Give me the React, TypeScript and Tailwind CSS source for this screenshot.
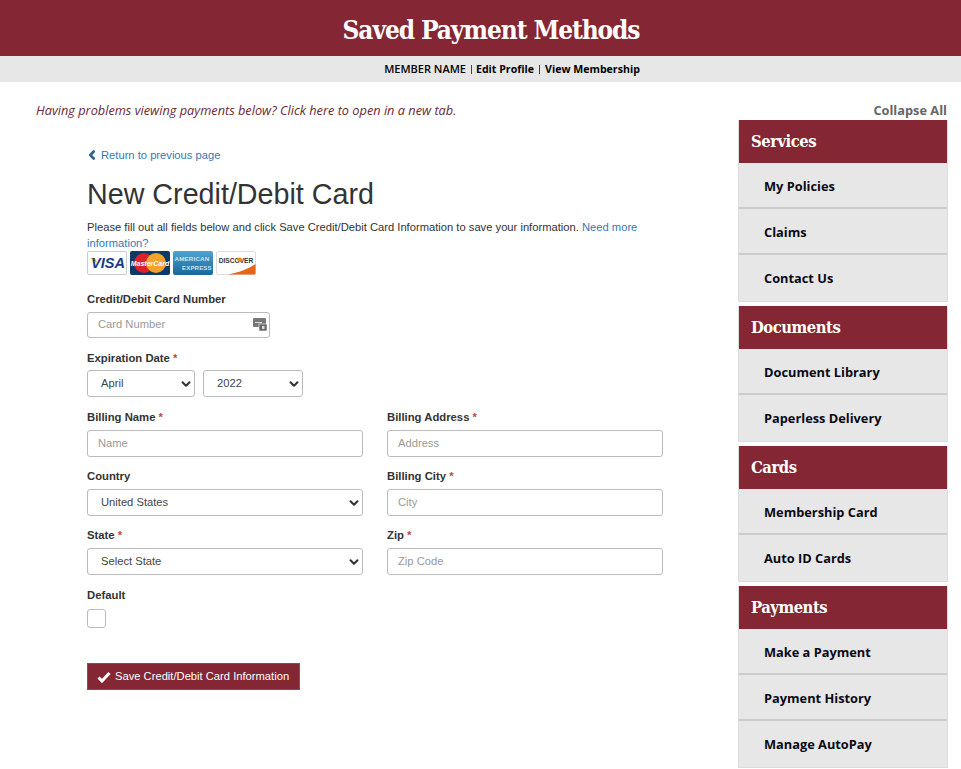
import { ChevronDown, ChevronLeft } from "lucide-react";

const sans = "font-['Liberation_Sans',Arial,sans-serif]";
const slab = "font-['DejaVu_Serif_Condensed','DejaVu_Serif',serif]";
const open = "font-['Open_Sans',sans-serif]";

const NAV = [
  { title: "Services", items: ["My Policies", "Claims", "Contact Us"] },
  { title: "Documents", items: ["Document Library", "Paperless Delivery"] },
  { title: "Cards", items: ["Membership Card", "Auto ID Cards"] },
  { title: "Payments", items: ["Make a Payment", "Payment History", "Manage AutoPay"] },
];

function Label({ text, required }: { text: string; required?: boolean }) {
  return (
    <label className="block h-[16px] mb-[5px] text-[11.3px] leading-[16px] font-bold text-[#333]">
      {text}
      {required && <span className="text-[#b94a48]"> *</span>}
    </label>
  );
}

function TextInput({ placeholder, tall }: { placeholder: string; tall?: boolean }) {
  return (
    <input
      placeholder={placeholder}
      className={`block w-full ${tall ? "h-[27px]" : "h-[26px]"} px-[10px] pb-[2px] bg-white border border-[#bbb] rounded-[3px] text-[11.2px] text-[#555] placeholder:text-[#999] outline-none`}
    />
  );
}

function Select({ value, className }: { value: string; className?: string }) {
  return (
    <div className={`relative ${className ?? ""}`}>
      <select
        defaultValue={value}
        className="block w-full h-[27px] pl-[13px] pr-6 appearance-none bg-white border border-[#bbb] rounded-[3px] text-[11.2px] text-[#444] outline-none"
      >
        <option>{value}</option>
      </select>
      <ChevronDown
        size={14}
        strokeWidth={3.5}
        className="absolute right-[2px] top-[7px] text-[#333] pointer-events-none"
      />
    </div>
  );
}

function CardLogos() {
  return (
    <div className="flex gap-[3px]">
      <svg width="40" height="24" viewBox="0 0 40 24">
        <rect x="0.5" y="0.5" width="39" height="23" rx="1.5" fill="#fff" stroke="#ccc" />
        <path d="M3 7h5l2 5z" fill="#f2ae14" />
        <text x="21" y="17" textAnchor="middle" fontSize="14.5" fontWeight="700" fontStyle="italic" fontFamily="Liberation Sans" fill="#1a3a8a">VISA</text>
      </svg>
      <svg width="40" height="24" viewBox="0 0 40 24">
        <rect width="40" height="24" rx="2" fill="#0b3a68" />
        <circle cx="14" cy="12" r="10" fill="#d9222a" />
        <circle cx="26" cy="12" r="10" fill="#f3a32c" />
        <text x="20" y="14.5" textAnchor="middle" fontSize="7" fontWeight="700" fontStyle="italic" fontFamily="Liberation Sans" fill="#fff">MasterCard</text>
      </svg>
      <svg width="40" height="24" viewBox="0 0 40 24">
        <defs>
          <linearGradient id="amex" x1="0" y1="0" x2="0" y2="1">
            <stop offset="0" stopColor="#4ea3cf" />
            <stop offset="1" stopColor="#16689c" />
          </linearGradient>
        </defs>
        <rect width="40" height="24" rx="2" fill="url(#amex)" />
        <text x="1.5" y="10" fontSize="6.2" fontWeight="700" letterSpacing="0.2" fontFamily="Liberation Sans" fill="#cfe4f0">AMERICAN</text>
        <text x="9" y="18.5" fontSize="6" fontWeight="700" letterSpacing="0.2" fontFamily="Liberation Sans" fill="#cfe4f0">EXPRESS</text>
      </svg>
      <svg width="40" height="24" viewBox="0 0 40 24">
        <rect x="0.5" y="0.5" width="39" height="23" rx="1.5" fill="#fff" stroke="#ddd" />
        <path d="M12 23.5C24 21 32 18 39.5 13v9a1.5 1.5 0 0 1-1.5 1.5z" fill="#e8641b" />
        <text x="20" y="11.5" textAnchor="middle" fontSize="6.6" fontWeight="700" fontFamily="Liberation Sans" fill="#333">DISCOVER</text>
        <circle cx="23.6" cy="9" r="2.4" fill="#ee8a1f" />
      </svg>
    </div>
  );
}

function CvvIcon() {
  return (
    <svg width="14" height="15" viewBox="0 0 14 15" className="absolute right-[3px] top-[5px]">
      <rect x="0" y="1" width="13" height="9" rx="1" fill="#777" />
      <rect x="2" y="5" width="7" height="1" fill="#ddd" />
      <rect x="6" y="7" width="8" height="7" fill="#666" stroke="#fff" strokeWidth="0.6" />
      <rect x="9" y="9" width="2.5" height="3" fill="#ddd" />
    </svg>
  );
}

function PaymentForm() {
  return (
    <div className={`pl-[87px] pt-[28px] ${sans}`}>
      <a className="flex items-center h-[16px] text-[11.2px] text-[#337ab7]">
        <ChevronLeft size={14} strokeWidth={4.5} className="-ml-[2px] mr-[2px] text-[#2a6496]" />
        Return to previous page
      </a>
      <h1 className="mt-[12px] h-[38px] text-[28.7px] leading-[38px] text-[#333]">New Credit/Debit Card</h1>
      <p className="mt-[6px] w-[576px] text-[11.2px] leading-[16px] text-[#333]">
        Please fill out all fields below and click Save Credit/Debit Card Information to save your information.{" "}
        <a className="text-[#337ab7]">Need more information?</a>
      </p>
      <CardLogos />

      <div className="mt-[16px] w-[183px]">
        <Label text="Credit/Debit Card Number" />
        <div className="relative">
          <TextInput placeholder="Card Number" />
          <CvvIcon />
        </div>
      </div>

      <div className="mt-[12px]">
        <Label text="Expiration Date" required />
        <div className="flex gap-[8px] -mt-px">
          <Select value="April" className="w-[108px]" />
          <Select value="2022" className="w-[100px]" />
        </div>
      </div>

      <div className="mt-[12px] grid grid-cols-[276px_276px] gap-x-[24px] gap-y-[11px]">
        <div>
          <Label text="Billing Name" required />
          <TextInput tall placeholder="Name" />
        </div>
        <div>
          <Label text="Billing Address" required />
          <TextInput tall placeholder="Address" />
        </div>
        <div>
          <Label text="Country" />
          <Select value="United States" />
        </div>
        <div>
          <Label text="Billing City" required />
          <TextInput tall placeholder="City" />
        </div>
        <div>
          <Label text="State" required />
          <Select value="Select State" />
        </div>
        <div>
          <Label text="Zip" required />
          <TextInput tall placeholder="Zip Code" />
        </div>
      </div>

      <div className="mt-[12px]">
        <Label text="Default" />
        <input
          type="checkbox"
          className="block mt-[6px] appearance-none w-[19px] h-[19px] bg-white border border-[#bbb] rounded-[3px]"
        />
      </div>

      <button className="mt-[35px] flex items-center w-[213px] h-[27px] pl-[9px] bg-[#842633] border border-[#2e6da4] text-white text-[11.2px]">
        <svg width="14" height="12" viewBox="0 0 14 12" className="mr-[4px]">
          <path d="M1.5 6.5 5 10l7.5-8" fill="none" stroke="#fff" strokeWidth="3" />
        </svg>
        Save Credit/Debit Card Information
      </button>
    </div>
  );
}

function Sidebar() {
  return (
    <aside className="w-[210px] shrink-0">
      <div className={`h-[38px] pt-[20px] pr-px text-right text-[12.8px] leading-[17px] font-bold text-[#666] ${open}`}>
        Collapse All
      </div>
      <div className="flex flex-col gap-[4px]">
        {NAV.map((group) => (
          <section key={group.title} className="border border-[#ddd] border-t-0">
            <h2 className={`flex items-center h-[43px] pt-[1px] pl-[12px] bg-[#842633] text-white text-[16.5px] tracking-[-0.5px] font-bold ${slab}`}>
              {group.title}
            </h2>
            {group.items.map((item) => (
              <a
                key={item}
                className={`flex items-center h-[46px] pt-[4px] last:pt-[2px] pl-[25px] bg-[#e8e7e8] border-b-2 border-[#ccc] last:border-b-0 text-[12.8px] font-bold text-[#0a0a14] ${open}`}
              >
                {item}
              </a>
            ))}
          </section>
        ))}
      </div>
    </aside>
  );
}

export default function App() {
  return (
    <div className="h-[769px] overflow-hidden bg-white">
      <header className={`flex items-center justify-center h-[56px] pt-[4px] pl-[21px] bg-[#842633] text-white text-[26px] tracking-[-1.1px] font-bold ${slab}`}>
        Saved Payment Methods
      </header>
      <div className={`flex items-center justify-center h-[26px] pl-[63px] bg-[#e8e7e8] text-[11px] leading-[16px] text-black ${open}`}>
        <span className="font-semibold">MEMBER NAME</span>
        <i className="ml-[5px] mr-[4px] w-px h-[9px] bg-[#444]" />
        <a className="font-bold text-[10.6px]">Edit Profile</a>
        <i className="ml-[5px] mr-[5px] w-px h-[9px] bg-[#444]" />
        <a className="font-bold text-[10.6px]">View Membership</a>
      </div>
      <div className="flex pr-[13px]">
        <main className="flex-1 min-w-0">
          <p className={`pl-[36px] pt-[20px] text-[12.75px] leading-[17px] italic text-[#6b2a35] ${open}`}>
            Having problems viewing payments below? Click here to open in a new tab.
          </p>
          <PaymentForm />
        </main>
        <Sidebar />
      </div>
    </div>
  );
}
